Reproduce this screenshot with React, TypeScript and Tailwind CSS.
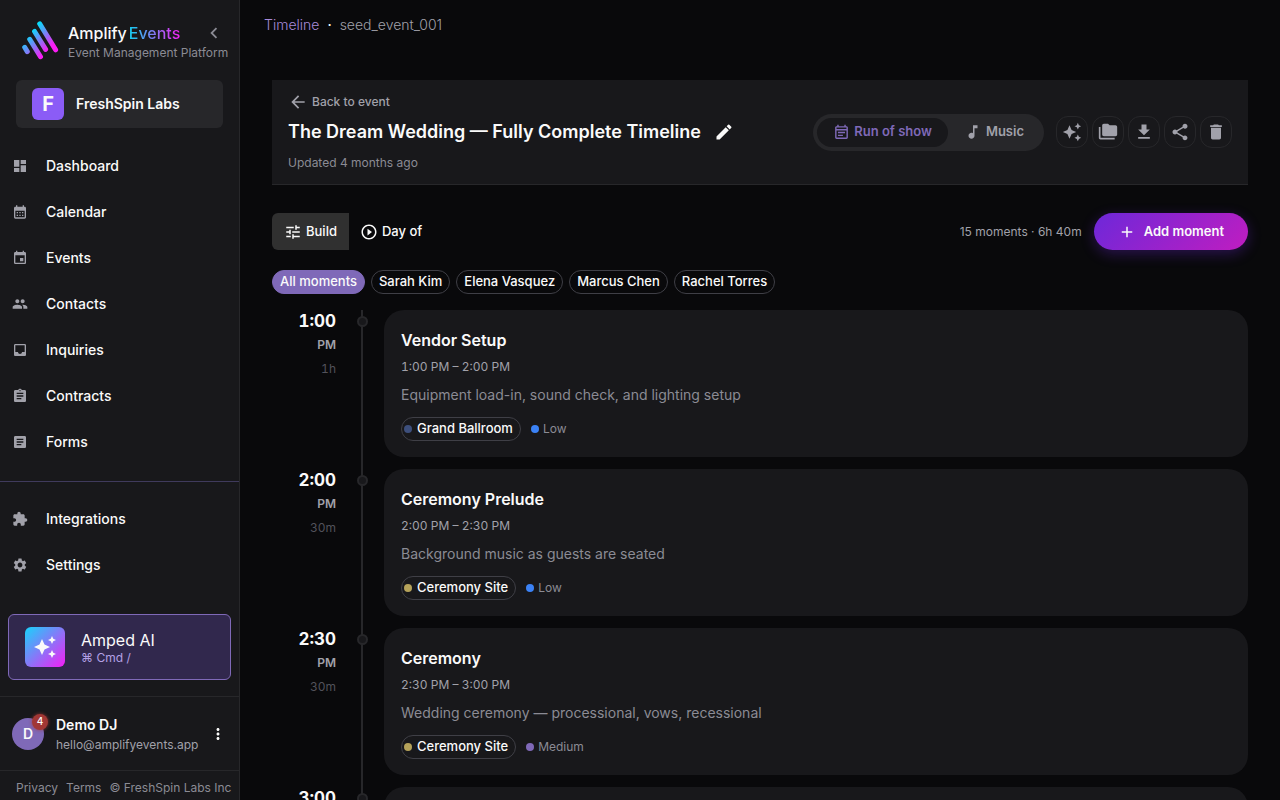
import type { ReactNode } from "react";
import type { IconType } from "react-icons";
import {
  MdAdd,
  MdArrowBack,
  MdArticle,
  MdAssignment,
  MdAutoAwesome,
  MdCalendarMonth,
  MdChevronLeft,
  MdDashboard,
  MdDelete,
  MdDownload,
  MdEdit,
  MdEvent,
  MdExtension,
  MdFolderCopy,
  MdInbox,
  MdMoreVert,
  MdMusicNote,
  MdOutlineEventNote,
  MdPeople,
  MdPlayCircleOutline,
  MdSettings,
  MdShare,
  MdTune,
} from "react-icons/md";

interface NavItem {
  label: string;
  icon: IconType;
}

interface Moment {
  time: string;
  duration: string;
  title: string;
  range: string;
  description: string;
  location: string;
  locationDot: string;
  priority: string;
  priorityDot: string;
}

const mainNav: NavItem[] = [
  { label: "Dashboard", icon: MdDashboard },
  { label: "Calendar", icon: MdCalendarMonth },
  { label: "Events", icon: MdEvent },
  { label: "Contacts", icon: MdPeople },
  { label: "Inquiries", icon: MdInbox },
  { label: "Contracts", icon: MdAssignment },
  { label: "Forms", icon: MdArticle },
];

const secondaryNav: NavItem[] = [
  { label: "Integrations", icon: MdExtension },
  { label: "Settings", icon: MdSettings },
];

const toolbarActions: NavItem[] = [
  { label: "AI assist", icon: MdAutoAwesome },
  { label: "Templates", icon: MdFolderCopy },
  { label: "Download", icon: MdDownload },
  { label: "Share", icon: MdShare },
  { label: "Delete", icon: MdDelete },
];

const people = ["All moments", "Sarah Kim", "Elena Vasquez", "Marcus Chen", "Rachel Torres"];

const moments: Moment[] = [
  {
    time: "1:00",
    duration: "1h",
    title: "Vendor Setup",
    range: "1:00 PM – 2:00 PM",
    description: "Equipment load-in, sound check, and lighting setup",
    location: "Grand Ballroom",
    locationDot: "bg-[#3d4f7c]",
    priority: "Low",
    priorityDot: "bg-[#3b82f6]",
  },
  {
    time: "2:00",
    duration: "30m",
    title: "Ceremony Prelude",
    range: "2:00 PM – 2:30 PM",
    description: "Background music as guests are seated",
    location: "Ceremony Site",
    locationDot: "bg-[#b5a25a]",
    priority: "Low",
    priorityDot: "bg-[#3b82f6]",
  },
  {
    time: "2:30",
    duration: "30m",
    title: "Ceremony",
    range: "2:30 PM – 3:00 PM",
    description: "Wedding ceremony — processional, vows, recessional",
    location: "Ceremony Site",
    locationDot: "bg-[#b5a25a]",
    priority: "Medium",
    priorityDot: "bg-[#7f69b8]",
  },
  {
    time: "3:00",
    duration: "1h",
    title: "Cocktail Hour",
    range: "3:00 PM – 4:00 PM",
    description: "Drinks and appetizers on the terrace",
    location: "Terrace",
    locationDot: "bg-[#3d4f7c]",
    priority: "Low",
    priorityDot: "bg-[#3b82f6]",
  },
];

function Logo() {
  return (
    <svg width="40" height="40" viewBox="20 20 40 40" fill="none" aria-hidden="true">
      <defs>
        <linearGradient id="logo" gradientUnits="userSpaceOnUse" x1="31" y1="31" x2="49" y2="49">
          <stop stopColor="#06dcfa" />
          <stop offset="1" stopColor="#fb1cf5" />
        </linearGradient>
      </defs>
      <path
        d="M39.7 23.8L55.6 49.8M34.6 31.5L45.6 49.4M29.7 39.3L40.5 56.7M24.7 47.3L27.3 51.6"
        stroke="url(#logo)"
        strokeWidth="5"
        strokeLinecap="round"
      />
    </svg>
  );
}

function NavList({ items }: { items: NavItem[] }) {
  return (
    <ul>
      {items.map(({ label, icon: Icon }) => (
        <li key={label}>
          <a href="#" className="flex h-[46px] items-center gap-[18px] px-3 text-sm font-medium hover:bg-white/5">
            <Icon size={16} className="text-[#a1a1aa]" />
            {label}
          </a>
        </li>
      ))}
    </ul>
  );
}

function Sidebar() {
  return (
    <aside className="flex h-full w-60 shrink-0 flex-col border-r border-[#27272a] bg-[#18181b]">
      {/* Brand */}
      <div className="flex items-center gap-2 pt-[19px] pl-5">
        <Logo />
        <div className="min-w-0 pt-0.5 whitespace-nowrap">
          <div className="flex items-center justify-between">
            <p className="text-base leading-6 font-medium">
              Amplify
              <span className="ml-0.5 bg-linear-to-r/srgb from-[#12d0f2] to-[#f81ff5] bg-clip-text text-transparent">
                Events
              </span>
            </p>
            <button aria-label="Collapse sidebar" className="pr-[3px] text-[#8b8b94]">
              <MdChevronLeft size={22} />
            </button>
          </div>
          <p className="text-xs leading-4 text-[#8b8b94]">Event Management Platform</p>
        </div>
      </div>

      {/* Workspace */}
      <button className="mx-4 mt-[19px] flex h-12 items-center gap-3 rounded-md bg-[#27272a] px-4 text-sm font-semibold">
        <span className="flex size-8 items-center justify-center rounded-md bg-[#8b5cf6] text-xl font-bold">F</span>
        FreshSpin Labs
      </button>

      <nav className="flex-1 pt-[15px]">
        <NavList items={mainNav} />
        <div className="mt-4 mb-[14px] border-t border-[#3f3a5c]" />
        <NavList items={secondaryNav} />
      </nav>

      <button className="mx-2 mb-4 flex h-[66px] items-center gap-4 rounded-md border border-[#7f69b8] bg-[#31284d] px-4 text-left">
        <span className="flex size-10 items-center justify-center rounded-md bg-linear-to-br/srgb from-[#17d4fb] to-[#f51df5]">
          <MdAutoAwesome size={24} />
        </span>
        <span className="pt-px">
          <span className="block text-base leading-5">Amped AI</span>
          <span className="block text-xs leading-4 text-[#b3a1e6]">⌘ Cmd /</span>
        </span>
      </button>

      {/* Account */}
      <div className="flex h-[74px] items-center border-t border-[#27272a] px-3">
        <div className="relative mr-3 flex size-8 items-center justify-center rounded-full bg-[#7f69b8] text-sm font-semibold">
          D
          <span className="absolute -top-1 -right-1 flex size-4 items-center justify-center rounded-full bg-[#a13735] text-[10px] font-medium shadow-[0_0_3px_1px_#a1373580]">
            4
          </span>
        </div>
        <div className="min-w-0 flex-1 pt-0.5">
          <p className="text-sm leading-5 font-semibold">Demo DJ</p>
          <p className="text-xs leading-5 text-[#a1a1aa]">hello@amplifyevents.app</p>
        </div>
        <button aria-label="Account menu">
          <MdMoreVert size={18} />
        </button>
      </div>

      <footer className="flex h-[30px] items-center gap-2 border-t border-[#27272a] pt-1 pl-4 text-xs whitespace-nowrap text-[#8b8b94]">
        <a href="#">Privacy</a>
        <a href="#">Terms</a>
        <span>© FreshSpin Labs Inc</span>
      </footer>
    </aside>
  );
}

function TimelineHeader() {
  return (
    <header className="flex items-center justify-between border-b border-[#27272a] bg-[#18181b] px-4 pt-3 pb-[10px]">
      <div>
        <a href="#" className="flex items-center gap-1 text-xs leading-5 font-medium text-[#a1a1aa]">
          <MdArrowBack size={20} />
          Back to event
        </a>
        <div className="flex h-10 items-center gap-[13px]">
          <h1 className="text-lg font-semibold">The Dream Wedding — Fully Complete Timeline</h1>
          <button aria-label="Edit title">
            <MdEdit size={20} />
          </button>
        </div>
        <p className="text-xs leading-[22px] text-[#8b8b94]">Updated 4 months ago</p>
      </div>

      <div className="flex items-center gap-3 pb-0.5">
        <div className="flex h-[37px] items-center rounded-full bg-[#27272a] p-1 text-[13px] font-semibold">
          <button className="flex h-full items-center gap-1 rounded-full bg-[#18181b] px-4 text-[#7f69b8]">
            <MdOutlineEventNote size={17} />
            Run of show
          </button>
          <button className="flex h-full items-center gap-1 px-4 text-[#a1a1aa]">
            <MdMusicNote size={18} />
            Music
          </button>
        </div>
        <div className="flex gap-1">
          {toolbarActions.map(({ label, icon: Icon }) => (
            <button
              key={label}
              aria-label={label}
              className="flex size-8 items-center justify-center rounded-xl border border-[#27272a] text-[#a1a1aa]"
            >
              <Icon size={20} />
            </button>
          ))}
        </div>
      </div>
    </header>
  );
}

function Pill({ children, active }: { children: ReactNode; active?: boolean }) {
  return (
    <button
      className={`h-6 rounded-full border px-[7px] text-[13px] font-medium ${
        active ? "border-[#7f69b8] bg-[#7f69b8]" : "border-[#3f3f46]"
      }`}
    >
      {children}
    </button>
  );
}

function MomentRow({ moment }: { moment: Moment }) {
  return (
    <li className="flex">
      <div className="w-16 text-right tabular-nums">
        <p className="text-[17px] leading-[22px] font-bold">{moment.time}</p>
        <p className="mt-px text-xs leading-6 font-semibold text-[#a1a1aa]">PM</p>
        <p className="text-xs leading-6 text-[#52525b]">{moment.duration}</p>
      </div>

      {/* Rail */}
      <div className="relative ml-5 flex w-3 justify-center">
        <div className="w-0.5 bg-[#27272a]" />
        <div className="absolute top-1.5 size-[11px] rounded-full border-2 border-[#27272a] bg-[#18181b]" />
      </div>

      <div className="min-w-0 flex-1 pb-3 pl-4">
        <article className="rounded-[20px] bg-[#18181b] px-[17px] pt-[18px] pb-4">
          <h2 className="text-base leading-6 font-semibold">{moment.title}</h2>
          <p className="mt-[3px] text-xs leading-6 text-[#a1a1aa] tabular-nums">{moment.range}</p>
          <p className="mt-1 text-sm leading-6 text-[#8b8b94]">{moment.description}</p>
          <div className="mt-[10px] flex items-center gap-[10px]">
            <span className="flex h-6 items-center gap-[5px] rounded-full border border-[#3f3f46] pr-[7px] pl-0.5 text-[13px] font-medium">
              <span className={`size-2 rounded-full ${moment.locationDot}`} />
              {moment.location}
            </span>
            <span className="flex items-center gap-1 text-xs text-[#8b8b94]">
              <span className={`size-2 rounded-full ${moment.priorityDot}`} />
              {moment.priority}
            </span>
          </div>
        </article>
      </div>
    </li>
  );
}

export default function App() {
  return (
    <div className="flex h-screen overflow-hidden bg-[#09090b] font-['Inter',sans-serif] text-[#fafafa]">
      <Sidebar />

      <main className="min-w-0 flex-1 overflow-y-auto [scrollbar-width:none]">
        <nav aria-label="Breadcrumb" className="flex h-12 items-center gap-2 px-6 pt-px text-sm font-light">
          <a href="#" className="text-[#a78bda]">
            Timeline
          </a>
          <span className="font-medium">·</span>
          <span className="text-[#a1a1aa]">seed_event_001</span>
        </nav>

        <div className="px-8 pt-8">
          <TimelineHeader />

          <div className="mt-7 flex items-center justify-between">
            <div className="flex text-[13px] font-medium">
              <button className="flex h-[37px] items-center gap-1 rounded-l-md bg-[#303030] px-3">
                <MdTune size={18} />
                Build
              </button>
              <button className="flex h-[37px] items-center gap-1 px-[11px]">
                <MdPlayCircleOutline size={18} />
                Day of
              </button>
            </div>
            <div className="flex items-center gap-3">
              <span className="text-xs text-[#a1a1aa]">15 moments · 6h 40m</span>
              <button className="flex h-[37px] items-center gap-2 rounded-full bg-linear-135/srgb from-[#6d28d9] to-[#c01dc0] px-6 text-[13px] font-semibold shadow-[0_4px_14px_#6d28d955]">
                <MdAdd size={18} />
                Add moment
              </button>
            </div>
          </div>

          <div className="mt-5 flex gap-1.5">
            {people.map((name, i) => (
              <Pill key={name} active={i === 0}>
                {name}
              </Pill>
            ))}
          </div>

          <ol className="mt-4">
            {moments.map((m) => (
              <MomentRow key={m.time} moment={m} />
            ))}
          </ol>
        </div>
      </main>
    </div>
  );
}
